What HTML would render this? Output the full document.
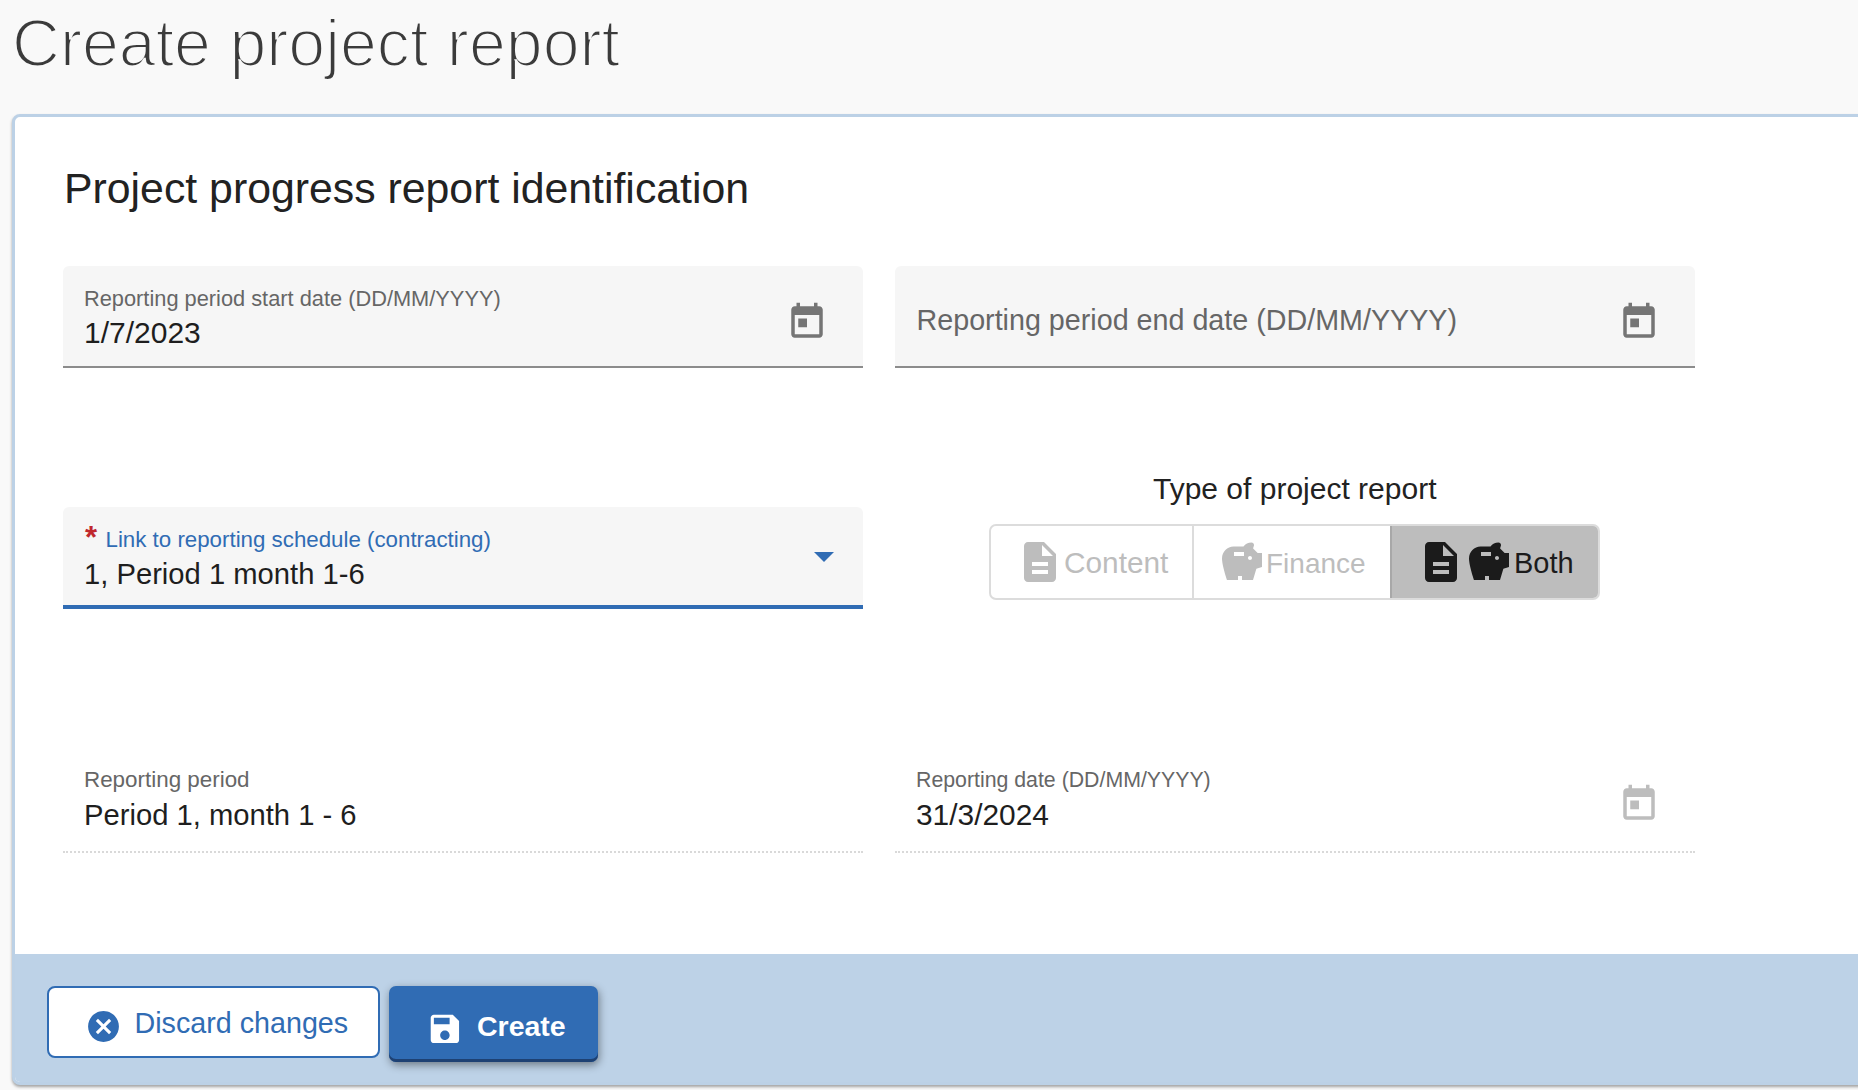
<!DOCTYPE html>
<html><head><meta charset="utf-8">
<style>
html,body{margin:0;padding:0;width:1858px;height:1090px;overflow:hidden;background:#f9f9f9;font-family:"Liberation Sans",sans-serif;}
.a{position:absolute;}
.t{position:absolute;white-space:nowrap;line-height:1;}
#card{position:absolute;left:12px;top:114px;width:1900px;height:971px;background:#fff;border:3px solid #bcd1e6;border-radius:8px;box-sizing:border-box;box-shadow:0 2px 3px rgba(0,0,0,.35);overflow:hidden;}
#footer{position:absolute;left:0;top:837px;width:100%;height:140px;background:#bdd2e7;}
.field{position:absolute;background:#f6f6f6;border-radius:6px 6px 0 0;box-sizing:border-box;}
.uline{position:absolute;left:0;right:0;bottom:0;height:2px;background:#8c8c8c;}
.dots{position:absolute;height:0;border-top:2px dotted #d9d9d9;}
svg{position:absolute;display:block;}
</style></head>
<body>
<div class="t" style="left:12px;top:9.5px;font-size:66.3px;color:#3b3b3b;-webkit-text-stroke:2.2px #f9f9f9;">Create project report</div>

<div id="card">
  <div id="footer"></div>
</div>

<!-- section heading -->
<div class="t" style="left:64px;top:167px;font-size:42.8px;color:#222;">Project progress report identification</div>

<!-- field 1 -->
<div class="field" style="left:63px;top:266px;width:800px;height:102px;"><div class="uline"></div></div>
<div class="t" style="left:84px;top:287.5px;font-size:21.8px;color:#666;">Reporting period start date (DD/MM/YYYY)</div>
<div class="t" style="left:84px;top:318px;font-size:30px;color:#1e1e1e;">1/7/2023</div>
<svg style="left:786px;top:301px" width="42" height="42" viewBox="0 0 24 24"><path fill="#757575" d="M19 3h-1V1h-2v2H8V1H6v2H5c-1.11 0-1.99.9-1.99 2L3 19c0 1.1.89 2 2 2h14c1.1 0 2-.9 2-2V5c0-1.1-.9-2-2-2zm0 16H5V8h14v11zM7 10h5v5H7z"/></svg>

<!-- field 2 -->
<div class="field" style="left:895px;top:266px;width:800px;height:102px;"><div class="uline"></div></div>
<div class="t" style="left:916.5px;top:305.5px;font-size:28.7px;color:#666;">Reporting period end date (DD/MM/YYYY)</div>
<svg style="left:1618px;top:301px" width="42" height="42" viewBox="0 0 24 24"><path fill="#757575" d="M19 3h-1V1h-2v2H8V1H6v2H5c-1.11 0-1.99.9-1.99 2L3 19c0 1.1.89 2 2 2h14c1.1 0 2-.9 2-2V5c0-1.1-.9-2-2-2zm0 16H5V8h14v11zM7 10h5v5H7z"/></svg>

<!-- dropdown -->
<div class="field" style="left:63px;top:507px;width:800px;height:102px;"><div class="uline" style="height:4px;background:#306cb4;"></div></div>
<div class="t" style="left:85px;top:522px;font-size:31px;color:#c0282d;font-weight:bold;">*</div>
<div class="t" style="left:105.5px;top:529px;font-size:22.3px;color:#306cb4;">Link to reporting schedule (contracting)</div>
<div class="t" style="left:84px;top:560px;font-size:29.2px;color:#1e1e1e;">1, Period 1 month 1-6</div>
<svg style="left:800px;top:532px" width="48" height="48" viewBox="0 0 24 24"><path fill="#306cb4" d="M7 10l5 5 5-5z"/></svg>

<!-- type of project report -->
<div class="t" style="left:1153px;top:474px;font-size:30px;color:#222;">Type of project report</div>
<div class="a" style="left:989px;top:524px;width:611px;height:76px;border:2px solid #dcdcdc;border-radius:7px;box-sizing:border-box;background:#fff;overflow:hidden;">
  <div class="a" style="left:201px;top:0;width:2px;height:100%;background:#dcdcdc;"></div>
  <div class="a" style="left:399px;top:0;right:0;height:100%;background:#bdbdbd;border-left:2px solid #a8a8a8;"></div>
</div>
<svg style="left:1016px;top:538px" width="48" height="48" viewBox="0 0 24 24"><path fill="#bdbdbd" d="M14 2H6c-1.1 0-1.99.9-1.99 2L4 20c0 1.1.89 2 2 2h12c1.1 0 2-.9 2-2V8l-6-6zm2 16H8v-2h8v2zm0-4H8v-2h8v2zm-3-5V3.5L18.5 9H13z"/></svg>
<div class="t" style="left:1064px;top:548px;font-size:29.8px;color:#bdbdbd;">Content</div>
<svg style="left:1218px;top:538px" width="48" height="48" viewBox="0 0 24 24"><path fill="#bdbdbd" d="M19.83 7.5l-2.27-2.27c.07-.42.18-.81.32-1.15.08-.18.12-.37.12-.58 0-.69-.56-1.25-1.25-1.25-1.64 0-3.09.79-4 2h-5C4.710 4.25 2 6.96 2 10.25S4.5 21 4.5 21H10v-2h2v2h5.5l1.68-5.590 2.82-.94V7.5h-2.17zM13 9H8V7h5v2zm3 2c-.55 0-1-.45-1-1s.45-1 1-1 1 .45 1 1-.45 1-1 1z"/></svg>
<div class="t" style="left:1266px;top:549.5px;font-size:28px;color:#bdbdbd;">Finance</div>
<svg style="left:1417px;top:538px" width="48" height="48" viewBox="0 0 24 24"><path fill="#1b1b1b" d="M14 2H6c-1.1 0-1.99.9-1.99 2L4 20c0 1.1.89 2 2 2h12c1.1 0 2-.9 2-2V8l-6-6zm2 16H8v-2h8v2zm0-4H8v-2h8v2zm-3-5V3.5L18.5 9H13z"/></svg>
<svg style="left:1465px;top:538px" width="48" height="48" viewBox="0 0 24 24"><path fill="#1b1b1b" d="M19.83 7.5l-2.27-2.27c.07-.42.18-.81.32-1.15.08-.18.12-.37.12-.58 0-.69-.56-1.25-1.25-1.25-1.64 0-3.09.79-4 2h-5C4.710 4.25 2 6.96 2 10.25S4.5 21 4.5 21H10v-2h2v2h5.5l1.68-5.590 2.82-.94V7.5h-2.17zM13 9H8V7h5v2zm3 2c-.55 0-1-.45-1-1s.45-1 1-1 1 .45 1 1-.45 1-1 1z"/></svg>
<div class="t" style="left:1514px;top:548.5px;font-size:29px;color:#1b1b1b;">Both</div>

<!-- read-only fields -->
<div class="t" style="left:84px;top:769px;font-size:22.4px;color:#666;">Reporting period</div>
<div class="t" style="left:84px;top:800.5px;font-size:29.2px;color:#1e1e1e;">Period 1, month 1 - 6</div>
<div class="dots" style="left:63px;top:851px;width:800px;"></div>
<div class="t" style="left:916px;top:769.5px;font-size:21.3px;color:#666;">Reporting date (DD/MM/YYYY)</div>
<div class="t" style="left:916px;top:800px;font-size:29.9px;color:#1e1e1e;">31/3/2024</div>
<svg style="left:1618px;top:783px" width="42" height="42" viewBox="0 0 24 24"><path fill="#bdbdbd" d="M19 3h-1V1h-2v2H8V1H6v2H5c-1.11 0-1.99.9-1.99 2L3 19c0 1.1.89 2 2 2h14c1.1 0 2-.9 2-2V5c0-1.1-.9-2-2-2zm0 16H5V8h14v11zM7 10h5v5H7z"/></svg>
<div class="dots" style="left:895px;top:851px;width:800px;"></div>

<!-- buttons -->
<div class="a" style="left:47px;top:986px;width:333px;height:72px;border:2px solid #306cb4;border-radius:8px;box-sizing:border-box;background:#fff;"></div>
<svg style="left:84.8px;top:1007.8px" width="37" height="37" viewBox="0 0 24 24"><path fill="#306cb4" d="M12 2C6.47 2 2 6.47 2 12s4.47 10 10 10 10-4.470 10-10S17.53 2 12 2zm5 13.59L15.59 17 12 13.41 8.41 17 7 15.59 10.59 12 7 8.41 8.41 7 12 10.59 15.59 7 17 8.41 13.41 12 17 15.59z"/></svg>
<div class="t" style="left:134.5px;top:1009px;font-size:28.7px;color:#306cb4;">Discard changes</div>
<div class="a" style="left:389px;top:986px;width:209px;height:76px;border-radius:7px;background:#306cb4;box-shadow:inset 0 -3px 0 #1e4173,1px 3px 8px rgba(0,0,0,.42);"></div>
<svg style="left:426.3px;top:1010.3px" width="37.8" height="37.8" viewBox="0 0 24 24"><path fill="#fff" d="M17 3H5c-1.11 0-2 .9-2 2v14c0 1.1.89 2 2 2h14c1.1 0 2-.9 2-2V7l-4-4zm-5 16c-1.66 0-3-1.34-3-3s1.34-3 3-3 3 1.34 3 3-1.34 3-3 3zm3-10H5V5h10v4z"/></svg>
<div class="t" style="left:477px;top:1011.5px;font-size:28.5px;color:#fff;font-weight:bold;">Create</div>
</body></html>
